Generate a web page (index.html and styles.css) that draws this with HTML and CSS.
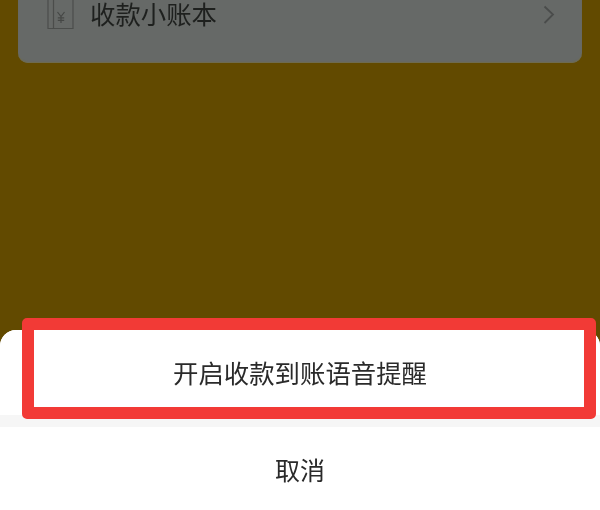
FILE: index.html
```html
<!DOCTYPE html>
<html lang="zh-CN">
<head>
<meta charset="utf-8">
<title>开启收款到账语音提醒</title>
<link rel="stylesheet" href="styles.css">
</head>
<body>
<main class="screen">
  <section class="card">
    <div class="row">
      <svg class="book" width="28" height="30" viewBox="0 0 28 30" fill="none" stroke="#4b4d4b" stroke-width="1.2">
        <path d="M1 0V28.500H26V0"/>
        <path d="M6.500 0V28.500"/>
        <path d="M10.500 12L14 16.500L17.500 12M14 16.500V23M10.800 17.800H17.200M10.800 20.300H17.200" stroke="#454745"/>
      </svg>
      <span class="row-label">收款小账本</span>
      <svg class="chevron" width="12" height="20" viewBox="0 0 12 20" fill="none" stroke="#4a4c4b" stroke-width="1.800">
        <path d="M1.500 1.500L10 9.500L1.500 18"/>
      </svg>
    </div>
  </section>
  <section class="sheet">
    <button class="action primary">开启收款到账语音提醒</button>
    <div class="gap"></div>
    <button class="action cancel">取消</button>
    <div class="highlight"></div>
  </section>
</main>
</body>
</html>
```
FILE: styles.css
```css
* { box-sizing: border-box; }
html, body { margin: 0; padding: 0; }
body {
  width: 600px;
  height: 510px;
  overflow: hidden;
  background: #624a00;
  font-family: "Liberation Sans", "Noto Sans CJK SC", sans-serif;
}
.screen {
  height: 510px;
  display: flex;
  flex-direction: column;
}
.card {
  height: 63px;
  margin: 0 18px;
  background: #666967;
  border-radius: 0 0 10px 10px;
  box-shadow: inset 0 -1px 1px #6f6c4e;
}
.row {
  height: 31px;
  padding: 0 27px 0 29px;
  display: flex;
  align-items: center;
}
.book { flex: none; margin-bottom: 1px; filter: blur(0.4px); }
.row-label {
  margin-left: 15px;
  font-size: 25.400px;
  line-height: 31px;
  color: #1e201e;
  filter: blur(0.4px);
}
.chevron { margin-left: auto; margin-bottom: 1px; filter: blur(0.4px); }
.sheet {
  position: relative;
  margin-top: auto;
  height: 180px;
  background: #fff;
  border-radius: 16px 16px 0 0;
  display: flex;
  flex-direction: column;
}
.action {
  display: block;
  width: 100%;
  border: 0;
  padding: 0;
  background: #fff;
  font-family: inherit;
  font-size: 25.400px;
  color: #2a2a2a;
  filter: blur(0.4px);
}
.primary { height: 85px; padding-bottom: 2px; border-radius: 16px 16px 0 0; }
.gap { height: 12px; background: #f6f6f6; }
.cancel { height: 83px; font-size: 25px; }
.highlight {
  position: absolute;
  left: 22px;
  top: -12px;
  width: 574px;
  height: 101px;
  border: 12px solid #f23a36;
  border-radius: 5px;
  filter: blur(0.4px);
}
```
